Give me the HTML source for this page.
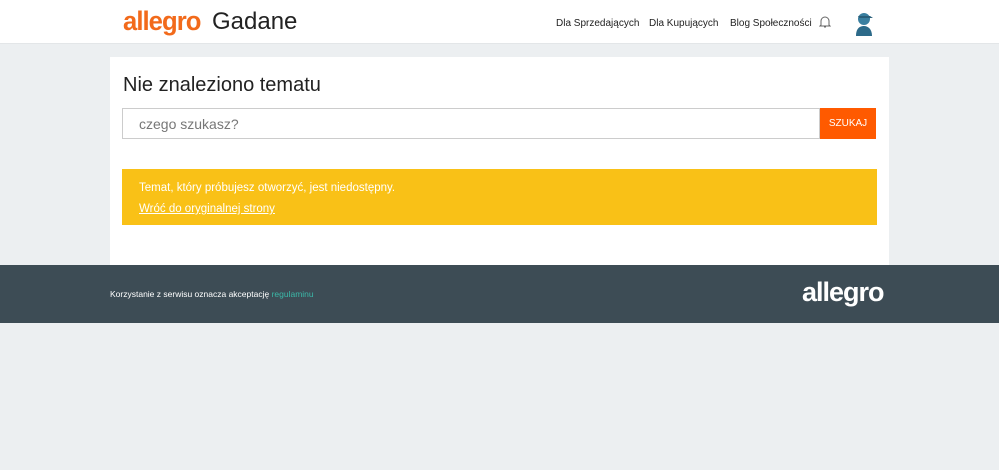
<!DOCTYPE html>
<html><head><meta charset="utf-8"><style>
*{margin:0;padding:0;box-sizing:border-box}
body{width:999px;height:470px;background:#eceff1;font-family:"Liberation Sans",sans-serif;position:relative;overflow:hidden}
.hdr{position:absolute;left:0;top:0;width:999px;height:44px;background:#fff;border-bottom:1px solid #e3e6e8}
.logo{position:absolute;left:123px;top:6px;font-size:27px;color:#f26a1b;font-weight:bold;letter-spacing:-1px;transform:scaleX(0.95);transform-origin:left}
.gad{position:absolute;left:212px;top:8px;font-size:24px;color:#222}
.nav{position:absolute;top:18px;font-size:10px;color:#222;white-space:nowrap}
.card{position:absolute;left:110px;top:57px;width:779px;height:208px;background:#fff}
h1{position:absolute;left:123px;top:74px;font-size:20px;font-weight:normal;color:#222}
.inp{position:absolute;left:122px;top:108px;width:698px;height:31px;border:1px solid #ccc;font-size:14px;color:#777;padding:7px 16px}
.btn{position:absolute;left:820px;top:108px;width:56px;height:31px;background:#ff5a00;color:#fff;font-size:10px;text-align:center;line-height:31px}
.warn{position:absolute;left:122px;top:169px;width:755px;height:56px;background:#f9c117;color:#fff;font-size:11.5px;padding:9px 17px;line-height:21px}
.ft{position:absolute;left:0;top:265px;width:999px;height:58px;background:#3d4c55}
</style></head><body>
<div class="hdr">
<div class="logo">allegro</div><div class="gad">Gadane</div>
<div class="nav" style="left:556px">Dla Sprzedających</div>
<div class="nav" style="left:649px">Dla Kupujących</div>
<div class="nav" style="left:730px">Blog Społeczności</div>
<svg style="position:absolute;left:819px;top:15px" width="12" height="14" viewBox="0 0 12 14"><path d="M2 10V6a4 4 0 0 1 8 0v4l1 1H1z M5 12h2" fill="none" stroke="#666" stroke-width="1"/></svg>
<svg style="position:absolute;left:852px;top:10px" width="24" height="26" viewBox="0 0 24 26"><ellipse cx="12" cy="9" rx="6" ry="6" fill="#3a7fa0"/><path d="M6 6h12l3 2H7z" fill="#2a5f7a"/><path d="M4 26c0-8 4-10 8-10s8 3 8 10z" fill="#2c6a89"/></svg>
</div>
<div class="card"></div>
<h1>Nie znaleziono tematu</h1>
<div class="inp">czego szukasz?</div>
<div class="btn">SZUKAJ</div>
<div class="warn">Temat, który próbujesz otworzyć, jest niedostępny.<br><span style="text-decoration:underline">Wróć do oryginalnej strony</span></div>
<div class="ft">
<div style="position:absolute;left:110px;top:24px;font-size:8.5px;color:#fff">Korzystanie z serwisu oznacza akceptację <span style="color:#3bb8a8">regulaminu</span></div>
<div style="position:absolute;left:802px;top:12px;font-size:27px;color:#fff;font-weight:bold;letter-spacing:-1px">allegro</div>
</div>
</body></html>
